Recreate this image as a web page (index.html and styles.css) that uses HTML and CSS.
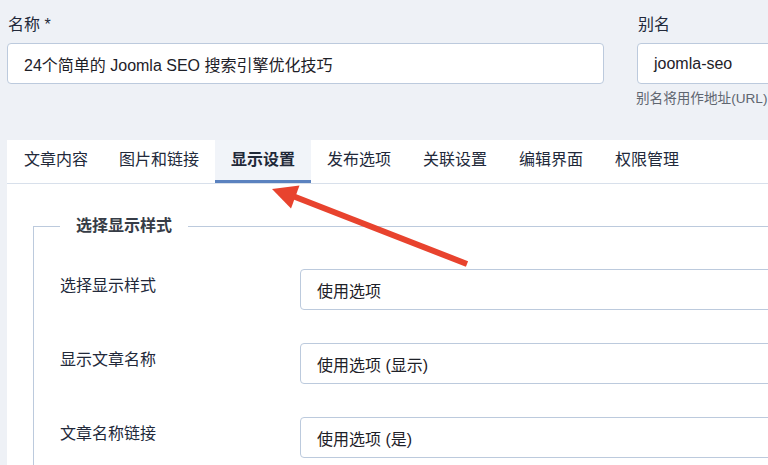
FILE: index.html
```html
<!DOCTYPE html>
<html lang="zh-CN">
<head>
<meta charset="utf-8">
<title>文章编辑</title>
<link rel="stylesheet" href="styles.css">
</head>
<body>
<div class="page">
  <div class="top-row">
    <div class="field field-name">
      <label class="field-label">名称 *</label>
      <div class="input">24个简单的 Joomla SEO 搜索引擎优化技巧</div>
    </div>
    <div class="field field-alias">
      <label class="field-label">别名</label>
      <div class="input">joomla-seo</div>
      <div class="help">别名将用作地址(URL)</div>
    </div>
  </div>

  <div class="card">
    <ul class="tabs">
      <li class="tab">文章内容</li>
      <li class="tab">图片和链接</li>
      <li class="tab active">显示设置</li>
      <li class="tab">发布选项</li>
      <li class="tab">关联设置</li>
      <li class="tab">编辑界面</li>
      <li class="tab">权限管理</li>
    </ul>
    <div class="tab-body">
      <fieldset class="group">
        <legend class="group-title">选择显示样式</legend>
        <div class="row">
          <div class="row-label">选择显示样式</div>
          <div class="select">使用选项</div>
        </div>
        <div class="row">
          <div class="row-label">显示文章名称</div>
          <div class="select">使用选项 (显示)</div>
        </div>
        <div class="row">
          <div class="row-label">文章名称链接</div>
          <div class="select">使用选项 (是)</div>
        </div>
      </fieldset>
    </div>
  </div>

  <svg class="arrow" width="768" height="465" viewBox="0 0 768 465" aria-hidden="true">
    <line x1="294" y1="196.5" x2="467" y2="264" stroke="#e8432e" stroke-width="6"/>
    <polygon points="272,189 299.5,185.5 291,208.5" fill="#e8432e"/>
  </svg>
</div>
</body>
</html>
```

FILE: styles.css
```css
* { box-sizing: border-box; }

html, body {
  margin: 0;
  padding: 0;
  background: #eef1f6;
  overflow: hidden;
}

body {
  font-family: "Liberation Sans", "Noto Sans CJK SC", sans-serif;
  font-size: 16px;
  color: #22262e;
  width: 768px;
  height: 465px;
}

.page {
  position: relative;
  width: 1000px;
  padding: 13px 0 0 7px;
}

.top-row {
  display: flex;
  gap: 33px;
}

.field-name { width: 597px; }
.field-alias { width: 320px; }

.field-label {
  display: block;
  line-height: 24px;
  margin: 0 0 6px 1px;
  color: #22293a;
}

.input {
  height: 41px;
  display: flex;
  align-items: center;
  padding: 0 16px;
  background: #fff;
  border: 1px solid #bccadd;
  border-radius: 4px;
  color: #1e2128;
  white-space: nowrap;
}

.help {
  margin: 4px 0 0 -1px;
  line-height: 21px;
  font-size: 13.6px;
  color: #5f6670;
  white-space: nowrap;
}

.card {
  margin-top: 31px;
  background: #fff;
}

.tabs {
  list-style: none;
  margin: 0;
  padding: 0;
  display: flex;
  border-bottom: 1px solid #d8e0eb;
}

.tab {
  height: 43px;
  line-height: 40px;
  padding: 0 16px;
  border-bottom: 3px solid transparent;
  color: #22293a;
  white-space: nowrap;
}

.tab:first-child { padding-left: 17px; padding-right: 15px; }

.tab.active {
  background: #f1f4f9;
  border-bottom-color: #5b82bf;
  font-weight: 700;
  color: #1f2838;
}

.tab-body {
  padding: 30px 0 20px 26px;
}

.group {
  margin: 0;
  padding: 31px 0 0 26px;
  border: 1px solid #bccadd;
  border-right: none;
  min-width: 0;
}

.group-title {
  padding: 0 16px;
  line-height: 24px;
  font-weight: 700;
  color: #363c46;
}

.row {
  display: flex;
  align-items: flex-start;
  margin-bottom: 33px;
}

.row-label {
  width: 240px;
  flex: none;
  padding-top: 5px;
  line-height: 24px;
  color: #22293a;
}

.select {
  flex: 1;
  height: 41px;
  display: flex;
  align-items: center;
  padding: 0 16px;
  border: 1px solid #bccadd;
  border-radius: 4px;
  color: #1e2128;
  background: #fff;
}

.arrow {
  position: absolute;
  left: 0;
  top: 0;
  pointer-events: none;
}
```
